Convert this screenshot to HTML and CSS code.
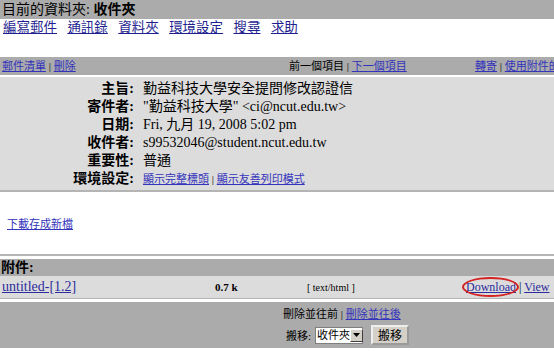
FILE: index.html
```html
<!DOCTYPE html>
<html lang="zh-Hant">

<head>
    <meta charset="UTF-8">
    <meta name="viewport" content="width=device-width, initial-scale=1.0">
    <title>收件夾</title>
    <link rel="stylesheet" href="styles.css">
</head>

<body>
    <div class="folder-bar">目前的資料夾: <b>收件夾</b></div>

    <div class="nav">
        <a href="#">編寫郵件</a>
        <a href="#">通訊錄</a>
        <a href="#">資料夾</a>
        <a href="#">環境設定</a>
        <a href="#">搜尋</a>
        <a href="#">求助</a>
    </div>

    <div class="toolbar">
        <div class="tool-left"><a href="#">郵件清單</a> | <a href="#">刪除</a></div>
        <div class="tool-mid">前一個項目 | <a href="#">下一個項目</a></div>
        <div class="tool-right"><a href="#">轉寄</a> | <a href="#">使用附件的方式轉寄</a></div>
    </div>

    <div class="headers">
        <div class="row"><span class="label">主旨:</span><span class="value">勤益科技大學安全提問修改認證信</span></div>
        <div class="row"><span class="label">寄件者:</span><span class="value">"勤益科技大學" &lt;ci@ncut.edu.tw&gt;</span></div>
        <div class="row"><span class="label">日期:</span><span class="value">Fri, 九月 19, 2008 5:02 pm</span></div>
        <div class="row"><span class="label">收件者:</span><span class="value">s99532046@student.ncut.edu.tw</span></div>
        <div class="row"><span class="label">重要性:</span><span class="value">普通</span></div>
        <div class="row"><span class="label">環境設定:</span><span class="value small"><a href="#">顯示完整標頭</a> | <a href="#">顯示友善列印模式</a></span></div>
    </div>

    <div class="message">
        <a href="#">下載存成新檔</a>
    </div>

    <div class="attach-title">附件:</div>
    <div class="attach-row">
        <a class="file" href="#">untitled-[1.2]</a>
        <span class="size">0.7 k</span>
        <span class="type">[ text/html ]</span>
        <span class="actions"><a class="marked" href="#">Download</a> | <a href="#">View</a></span>
    </div>

    <div class="bottom">
        <div class="del-links">刪除並往前 | <a href="#">刪除並往後</a></div>
        <form class="move">
            <span>搬移:</span>
            <span class="picker">
                <span class="picked">收件夾</span>
                <span class="drop"><svg width="7" height="4" viewBox="0 0 7 4"><path d="M0 0h7L3.5 4z" fill="#000"/></svg></span>
            </span>
            <button type="button">搬移</button>
        </form>
    </div>
</body>

</html>
```

FILE: styles.css
```css
/* Global Styles */
body {
    margin: 0;
    width: 554px;
    height: 351px;
    overflow: hidden;
    background-color: #fff;
    font-family: "Liberation Serif", "Noto Sans CJK TC", serif;
    color: #000;
}

a {
    color: #2c2c9c;
}

.folder-bar {
    height: 19px;
    line-height: 19px;
    padding-left: 2px;
    background-color: #ababab;
    font-size: 14px;
}

.nav {
    height: 38px;
    padding-left: 3px;
    font-size: 13.5px;
    line-height: 18px;
    word-spacing: 7px;
}

.nav a {
    color: #1f1f8f;
}

/* toolbar with the small links */
.toolbar {
    display: flex;
    height: 18px;
    line-height: 18px;
    background-color: #ababab;
    font-size: 11px;
    white-space: nowrap;
    overflow: hidden;
    border-bottom: 2px solid #fff;
}

.toolbar > div {
    flex-shrink: 0;
}

.toolbar a,
.small a,
.message a,
.del-links a {
    color: #3333bb;
}

.tool-left {
    width: 287px;
    padding-left: 2px;
}

.tool-mid {
    width: 186px;
}

/* message headers */
.headers {
    padding: 3px 0 2px;
    background-color: #dcdcdc;
    border-bottom: 2px solid #b4b4b4;
}

.row {
    display: flex;
    height: 18px;
    line-height: 18px;
    font-size: 14px;
}

.label {
    width: 134px;
    text-align: right;
    font-weight: bold;
}

.value {
    padding-left: 9px;
}

.value.small {
    font-size: 11px;
}

.message {
    height: 62px;
    padding-left: 7px;
    font-size: 11px;
    line-height: 64px;
    border-bottom: 2px solid #b4b4b4;
    margin-bottom: 3px;
}

/* attachments */
.attach-title {
    height: 17px;
    line-height: 17px;
    padding-left: 1px;
    background-color: #ababab;
    font-size: 14px;
    font-weight: bold;
}

.attach-row {
    display: flex;
    align-items: center;
    height: 22px;
    padding-left: 2px;
    background-color: #dcdcdc;
    border-bottom: 1px solid #b4b4b4;
    margin-bottom: 3px;
    font-size: 14px;
}

.file {
    width: 213px;
}

.size {
    width: 92px;
    font-size: 11px;
    font-weight: bold;
}

.type {
    width: 159px;
    font-size: 10px;
}

.actions {
    font-size: 12px;
}

.marked {
    position: relative;
}

.marked::after {
    content: "";
    position: absolute;
    left: -4px;
    right: -3px;
    top: -3px;
    bottom: -3px;
    border: 2px solid #d42323;
    border-radius: 50%;
}

/* bottom actions */
.bottom {
    height: 44px;
    padding-top: 2px;
    background-color: #ababab;
    font-size: 11px;
    padding-left: 283px;
}

.del-links {
    height: 20px;
    line-height: 20px;
}

.move {
    display: flex;
    align-items: center;
    gap: 4px;
    margin: 1px 0 0 3px;
}

.picker {
    display: flex;
    align-items: center;
    height: 17px;
    width: 48px;
    background-color: #fff;
    border: 1px solid #7f7f7f;
    box-sizing: border-box;
    white-space: nowrap;
}

.picked {
    flex: 1;
    padding-left: 1px;
    font-size: 11px;
    line-height: 15px;
}

.drop {
    display: flex;
    align-items: center;
    justify-content: center;
    flex-shrink: 0;
    width: 13px;
    height: 13px;
    margin-right: 1px;
    background-color: #d4d0c8;
    border: 1px solid #fff;
    border-right-color: #404040;
    border-bottom-color: #404040;
    box-sizing: border-box;
}

.move button {
    margin-left: 4px;
    height: 20px;
    padding: 0 5px;
    font-family: "Noto Sans CJK TC", sans-serif;
    font-size: 12px;
    line-height: 16px;
    background-color: #d4d0c8;
    border: 2px outset #eee;
}
```
